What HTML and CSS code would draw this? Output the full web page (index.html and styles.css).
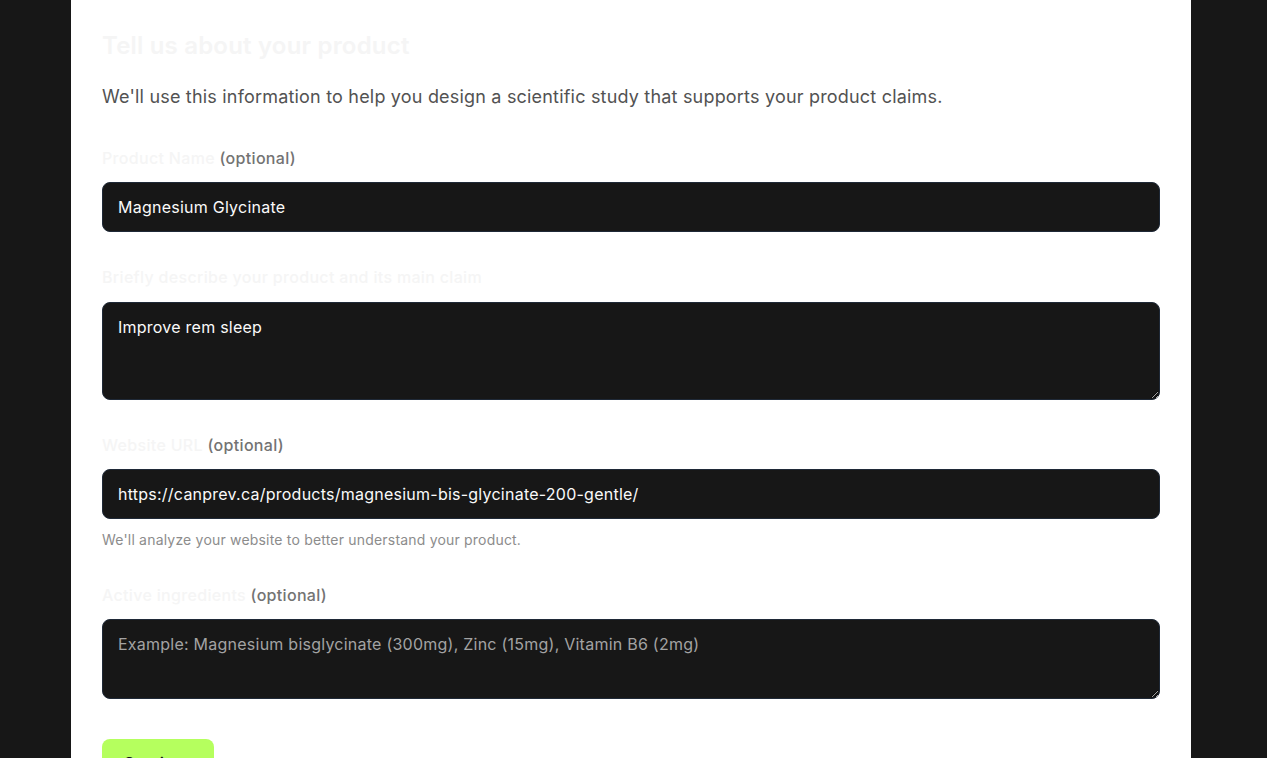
FILE: index.html
```html
<!DOCTYPE html>
<html lang="en">
<head>
<meta charset="utf-8">
<title>Tell us about your product</title>
<link rel="stylesheet" href="styles.css">
</head>
<body>
<div class="page">
  <main class="card">
    <h1 class="title">Tell us about your product</h1>
    <p class="lead">We'll use this information to help you design a scientific study that supports your product claims.</p>
    <form class="form">
      <div class="field">
        <label class="label" for="name">Product Name <span class="opt">(optional)</span></label>
        <input class="input" id="name" type="text" value="Magnesium Glycinate">
      </div>
      <div class="field">
        <label class="label label-area" for="desc">Briefly describe your product and its main claim</label>
        <textarea class="input area area-lg" id="desc">Improve rem sleep</textarea>
      </div>
      <div class="field">
        <label class="label" for="url">Website URL <span class="opt">(optional)</span></label>
        <input class="input" id="url" type="text" value="https://canprev.ca/products/magnesium-bis-glycinate-200-gentle/">
        <p class="help">We'll analyze your website to better understand your product.</p>
      </div>
      <div class="field">
        <label class="label" for="ing">Active ingredients <span class="opt">(optional)</span></label>
        <textarea class="input area area-sm" id="ing" placeholder="Example: Magnesium bisglycinate (300mg), Zinc (15mg), Vitamin B6 (2mg)"></textarea>
      </div>
      <div class="actions">
        <button class="btn" type="button">Continue</button>
      </div>
    </form>
  </main>
</div>
</body>
</html>
```

FILE: styles.css
```css
* { box-sizing: border-box; }
html, body { margin: 0; padding: 0; height: 100%; overflow: hidden; }
body {
  background: #171717;
  font-family: Inter, "Noto Sans", "Liberation Sans", sans-serif;
  letter-spacing: 0.012em;
}
.page {
  display: flex;
  justify-content: center;
  min-height: 100%;
  padding-right: 5px;
}
.card {
  width: 1120px;
  flex-shrink: 0;
  background: #ffffff;
  padding: 30px 31px 40px;
  min-height: 100vh;
}
.title {
  margin: 0;
  font-size: 24px;
  line-height: 32px;
  font-weight: 600;
  color: #f5f5f5;
}
.lead {
  margin: 21px 0 0;
  font-size: 18px;
  line-height: 28px;
  color: #525252;
}
.form {
  display: flex;
  flex-direction: column;
  gap: 33px;
  margin-top: 35px;
}
.field {
  display: flex;
  flex-direction: column;
}
.label {
  font-size: 16px;
  line-height: 24px;
  font-weight: 500;
  color: #f5f5f5;
  margin-bottom: 12px;
  letter-spacing: 0.02em;
}
.label-area { margin-bottom: 13px; }
.opt {
  color: #737373;
}
.input {
  display: block;
  width: 100%;
  height: 50px;
  padding: 12px 15px;
  background: #171717;
  border: 1px solid #1f2937;
  border-radius: 8px;
  color: #fafafa;
  font-family: inherit;
  font-size: 16px;
  line-height: 24px;
  letter-spacing: 0.015em;
  outline: none;
  color-scheme: dark;
}
.input::placeholder { color: #a3a3a3; }
.area { resize: vertical; }
.area-lg { height: 98px; }
.area-sm { height: 80px; }
.help {
  margin: 11px 0 0;
  font-size: 14px;
  line-height: 20px;
  color: #8c8c8c;
}
.actions {
  margin-top: 7px;
}
.btn {
  width: 112px;
  padding: 12px 0;
  line-height: 24px;
  border: none;
  border-radius: 8px;
  background: #b5ff5e;
  color: #171717;
  font-family: inherit;
  font-size: 16px;
  font-weight: 600;
}
```
